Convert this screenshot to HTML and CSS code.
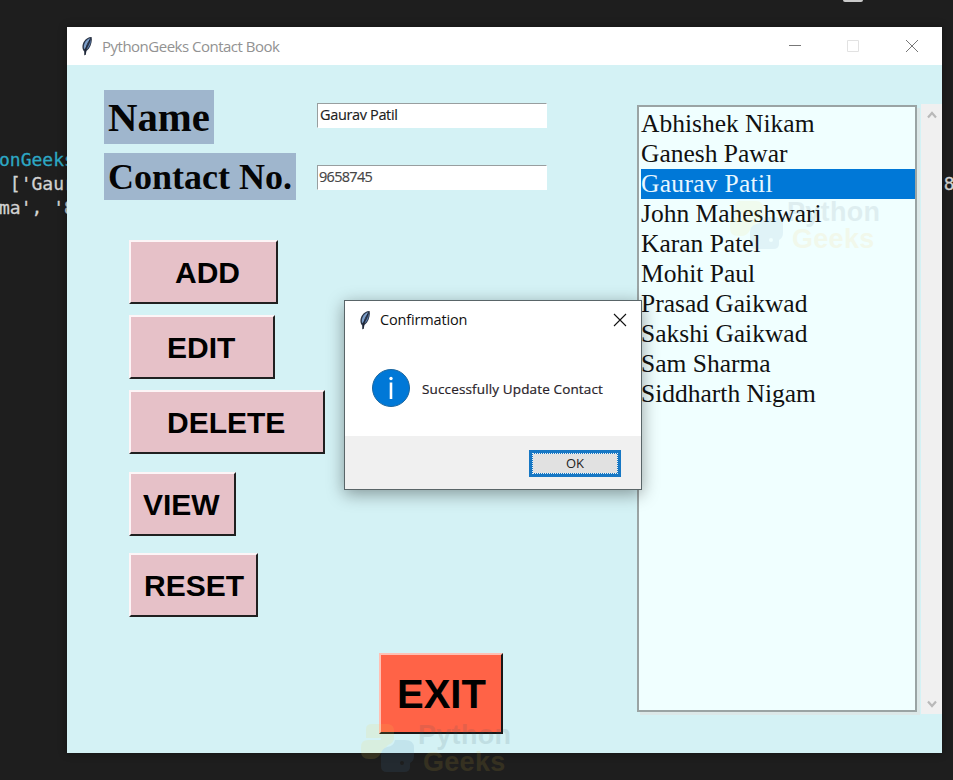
FILE: index.html
```html
<!DOCTYPE html>
<html lang="en">
<head>
<meta charset="utf-8">
<title>PythonGeeks Contact Book</title>
<link rel="stylesheet" href="styles.css">
</head>
<body>
<svg width="0" height="0" class="defs">
  <symbol id="feather" viewBox="0 0 12 20">
    <path d="M3.200 15.500C1 13 .8 9 3 5.500 5 2.500 8 .8 10.600 1c.8 3-.2 8-2.600 11.500L5.500 15l-.8 3.500-1.200 1z" fill="#2a3446"/>
    <path d="M3 12.500C2 9 4.500 4 8.800 2 8.300 5 6.500 9 3.800 13z" fill="#7d9fca"/>
    <path d="M5.500 13C7.500 10 9.300 6.500 9.800 3c.3 3.500-.8 7.500-3.300 9.700z" fill="#5b7fb2"/>
    <path d="M8.800 4C6 8 4.500 12 4 19" fill="none" stroke="#1a2030" stroke-width=".9"/>
  </symbol>
  <symbol id="snakes" viewBox="0 0 54 48">
    <path d="M5 5q0-5 6-5h15q7 0 7 7v7q0 5-6 7l-7 8q-3 6-9 6H8q-8 0-8-8v-4q0-7 7-7h13v-2H5z" fill="#f5d94a"/>
    <path fill-rule="evenodd" d="M34 16h10q9 0 9 8v8q0 5-4 7v4q0 5-6 5H26q-6 0-6-6V31q0-6 6-8 7-1 8-7zM39 39a2 2 0 1 0 4 0 2 2 0 1 0-4 0z" fill="#4a84b4"/>
  </symbol>
</svg>
<div class="desktop">
  <pre class="terminal"><span class="path">onGeeks</span>
 ['Gaur
ma', '8</pre>
  <pre class="terminal terminal-right">'8</pre>
  <div class="handle"></div>

  <main class="window">
    <header class="titlebar">
      <svg class="feather"><use href="#feather"/></svg>
      <span class="title">PythonGeeks Contact Book</span>
      <svg class="controls" width="132" height="16" viewBox="0 0 132 16" fill="none">
        <path d="M1 7.500h12" stroke="#777"/>
        <path d="M59.500 2.500h11v11h-11z" stroke="#e2e2e2"/>
        <path d="m118 2 12 12m0-12-12 12" stroke="#777"/>
      </svg>
    </header>
    <div class="content">
      <section class="form">
        <div class="fields">
          <label class="label name">Name</label>
          <div class="entry">Gaurav Patil</div>
          <label class="label contact">Contact No.</label>
          <div class="entry number">9658745</div>
        </div>
        <div class="buttons">
          <button class="btn add">ADD</button>
          <button class="btn edit">EDIT</button>
          <button class="btn delete">DELETE</button>
          <button class="btn view">VIEW</button>
          <button class="btn reset">RESET</button>
        </div>
        <button class="btn exit">EXIT</button>
      </section>
      <section class="listing">
        <ul class="listbox">
          <li>Abhishek Nikam</li>
          <li>Ganesh Pawar</li>
          <li class="selected">Gaurav Patil</li>
          <li>John Maheshwari</li>
          <li>Karan Patel</li>
          <li>Mohit Paul</li>
          <li>Prasad Gaikwad</li>
          <li>Sakshi Gaikwad</li>
          <li>Sam Sharma</li>
          <li>Siddharth Nigam</li>
        </ul>
        <div class="scrollbar">
          <svg width="10" height="8" viewBox="0 0 10 8"><path d="m1 6.500 4-4.500 4 4.500" fill="none" stroke="#b9b9b9" stroke-width="2.200"/></svg>
          <svg width="10" height="8" viewBox="0 0 10 8"><path d="m1 1.500 4 4.500 4-4.500" fill="none" stroke="#b9b9b9" stroke-width="2.200"/></svg>
        </div>
      </section>
    </div>
  </main>

  <div class="brand brand-top">
    <svg width="54" height="48"><use href="#snakes"/></svg>
    <div class="brand-text"><span>Python</span><span class="geeks">Geeks</span></div>
  </div>
  <div class="brand brand-bottom">
    <svg width="54" height="48"><use href="#snakes"/></svg>
    <div class="brand-text"><span>Python</span><span class="geeks">Geeks</span></div>
  </div>

  <div class="dialog">
    <header class="dialog-bar">
      <svg class="feather"><use href="#feather"/></svg>
      <span class="dialog-title">Confirmation</span>
      <svg class="close" width="14" height="14" viewBox="0 0 14 14"><path d="m1 1 12 12m0-12L1 13" stroke="#111" stroke-width="1.100"/></svg>
    </header>
    <div class="message">
      <svg width="38" height="38" viewBox="0 0 38 38"><circle cx="19" cy="19" r="18.500" fill="#0078d7" stroke="#1b669f"/><circle cx="19" cy="9.500" r="1.700" fill="#fff"/><path d="M19 13.500V30" stroke="#fff" stroke-width="2.600"/></svg>
      <span class="message-text">Successfully Update Contact</span>
    </div>
    <footer class="dialog-footer"><button class="ok"><span>OK</span></button></footer>
  </div>
</div>
</body>
</html>
```
FILE: styles.css
```css
* { box-sizing: border-box; }
body { margin: 0; }
.defs { position: absolute; }
button { margin: 0; padding: 0; }

.desktop {
  position: relative;
  width: 953px;
  height: 780px;
  overflow: hidden;
  background: #1e1e1e;
}
.terminal {
  position: absolute;
  left: -1px;
  top: 148px;
  margin: 0;
  color: #d2d2d2;
  font: 18px/24px "DejaVu Sans Mono", monospace;
  -webkit-text-stroke: .3px;
}
.terminal-right { left: 933px; top: 172px; }
.path { color: #2da8c4; }
.handle {
  position: absolute;
  left: 843px;
  top: -4px;
  width: 20px;
  height: 6px;
  border-radius: 2px;
  background: #c9c9c9;
}

.window {
  position: absolute;
  left: 67px;
  top: 27px;
  width: 875px;
  height: 726px;
  background: #d4f2f5;
  box-shadow: 0 0 8px rgba(0, 0, 0, .35);
}
.titlebar {
  display: flex;
  align-items: center;
  height: 38px;
  padding: 0 22px 0 14px;
  background: #fff;
}
.feather { width: 12px; height: 20px; }
.title {
  margin: -1px 0 0 9px;
  color: #929292;
  font: 15px/20px "Open Sans", sans-serif;
  letter-spacing: -.5px;
  white-space: nowrap;
}
.controls { margin-left: auto; }
.content { display: flex; height: 688px; }
.form { width: 570px; padding: 25px 0 0 37px; }
.fields {
  display: grid;
  grid-template-columns: 213px 230px;
  grid-template-rows: 54px 47px;
  row-gap: 9px;
}
.label {
  justify-self: start;
  padding-left: 4px;
  background: #9fb6cd;
  color: #050505;
  font-family: "Liberation Serif", serif;
  font-weight: bold;
  white-space: nowrap;
}
.name { width: 110px; font-size: 40.8px; line-height: 56px; height: 54px; }
.contact { width: 192px; font-size: 36px; line-height: 49px; height: 47px; }
.entry {
  align-self: center;
  width: 230px;
  height: 25px;
  margin-top: -4px;
  padding-left: 2px;
  border: 1px solid #fff;
  border-top-color: #989e9f;
  border-left-color: #989e9f;
  background: #fff;
  color: #202020;
  font: 14.500px/22px "Open Sans", sans-serif;
  letter-spacing: -.35px;
  -webkit-text-stroke: .15px;
}
.number { margin-top: 1px; padding-left: 1px; color: #444; letter-spacing: -.7px; }
.buttons {
  display: flex;
  flex-direction: column;
  align-items: flex-start;
  gap: 11px;
  padding: 40px 0 0 25px;
}
.btn {
  height: 64px;
  border: solid;
  border-width: 2px;
  border-color: #fdf5f7 #202020 #202020 #fdf5f7;
  background: #e6c1c8;
  color: #000;
  font: bold 30px/60px "Liberation Sans", sans-serif;
  text-align: left;
  white-space: nowrap;
}
.buttons .btn { padding-top: 1px; line-height: 59px; }
.add { width: 149px; padding-left: 44px; }
.edit { width: 146px; padding-left: 36px; }
.delete { width: 196px; padding-left: 36px; }
.view { width: 107px; margin-top: 7px; padding-left: 12px; }
.reset { width: 129px; margin-top: 6px; padding-left: 13px; }
.exit {
  display: block;
  width: 124px;
  height: 81px;
  margin: 36px 0 0 275px;
  padding: 1px 0 0 16px;
  border-color: #ffc0b4 #171717 #171717 #ffc0b4;
  background: #ff6347;
  font-size: 40px;
  line-height: 76px;
}
.listing { display: flex; width: 305px; padding-top: 39px; }
.listbox {
  width: 280px;
  height: 607px;
  margin: 1px 0 0;
  padding: 2px 0 0 2px;
  border: 2px solid #9aa4a4;
  background: #f0ffff;
  list-style: none;
  box-shadow: 3px 3px 0 #dce8e8;
  color: #111;
  font: 25.500px/30px "Liberation Serif", serif;
}
.listbox li { height: 30px; }
.listbox .selected { background: #0078d7; color: #e8f7ff; letter-spacing: .3px; }
.scrollbar {
  display: flex;
  flex-direction: column;
  justify-content: space-between;
  align-items: center;
  width: 21px;
  height: 610px;
  margin-left: 4px;
  padding: 7px 0 6px;
  background: #f0f0f0;
  z-index: 1;
}

.brand { position: absolute; display: flex; gap: 3px; opacity: .12; }
.brand-top { left: 730px; top: 201px; opacity: .09; }
.brand-bottom { left: 361px; top: 724px; }
.brand-text {
  display: flex;
  flex-direction: column;
  color: #365263;
  font: bold 27px/27px "Liberation Sans", sans-serif;
  letter-spacing: .3px;
  margin-top: -2px;
}
.geeks { margin-left: 5px; }
.brand-top .geeks { color: #ffb52e; }
.brand-bottom .geeks { color: #ddb73a; }

.dialog {
  position: absolute;
  left: 344px;
  top: 300px;
  width: 298px;
  height: 190px;
  border: 1px solid #596568;
  background: #fff;
  box-shadow: 0 4px 16px rgba(0, 0, 0, .38);
}
.dialog-bar {
  display: flex;
  align-items: center;
  height: 37px;
  padding: 0 14px;
}
.dialog-title {
  margin-left: 9px;
  color: #111;
  font: 14.500px/20px "Open Sans", sans-serif;
  letter-spacing: -.15px;
  white-space: nowrap;
}
.close { margin-left: auto; }
.message {
  display: flex;
  align-items: center;
  height: 98px;
  padding: 2px 0 0 27px;
}
.message-text {
  margin: 2px 0 0 12px;
  color: #292329;
  font: 13.500px/20px "Open Sans", sans-serif;
  letter-spacing: .14px;
  -webkit-text-stroke: .2px;
  white-space: nowrap;
}
.dialog-footer {
  display: flex;
  justify-content: flex-end;
  height: 53px;
  padding: 14px 20px 0 0;
  background: #f0f0f0;
}
.ok {
  width: 92px;
  height: 27px;
  padding: 1px;
  border: 2px solid #1677c4;
  background: #1677c4;
  color: #222;
  font: 13px/19px "Open Sans", sans-serif;
}
.ok span {
  display: block;
  height: 21px;
  border: 1px dotted #e8f0f4;
  background: #e1e1e1;
  background-clip: padding-box;
}
```
